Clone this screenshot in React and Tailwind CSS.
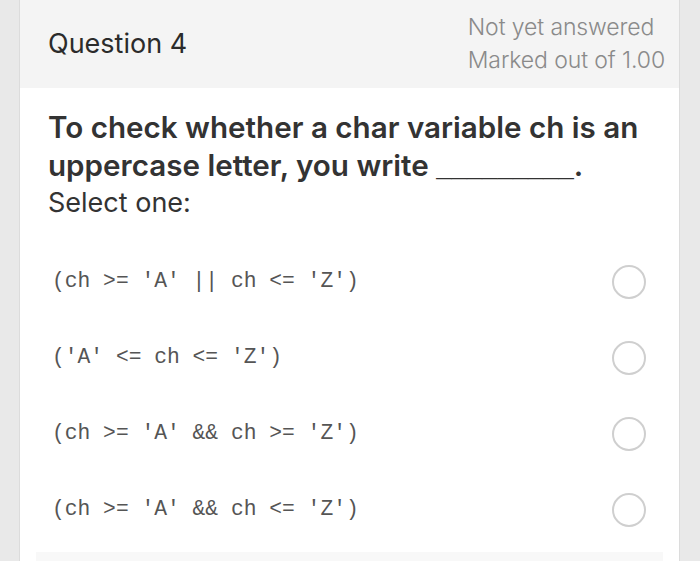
import React from 'react';

const options = [
  "(ch >= 'A' || ch <= 'Z')",
  "('A' <= ch <= 'Z')",
  "(ch >= 'A' && ch >= 'Z')",
  "(ch >= 'A' && ch <= 'Z')",
];

export default function App() {
  return (
    <div className="w-[700px] h-[561px] overflow-hidden bg-[#e9e9e9] flex" style={{ fontFamily: 'Inter, "Liberation Sans", Arial, sans-serif' }}>
      <div className="ml-[19px] w-[661px] h-full bg-white border-l border-r border-[#dcdcdc] flex flex-col">
        <div className="h-[88px] bg-[#f4f4f4] flex items-center justify-between pl-[28px] pr-[14px] shrink-0">
          <h2 className="text-[27px] text-[#2b2b2b] tracking-[0px]">Question 4</h2>
          <div className="text-[23px] leading-[33px] text-[#8a8a8a] tracking-[-0.1px] font-light">
            <p>Not yet answered</p>
            <p>Marked out of 1.00</p>
          </div>
        </div>

        <div className="pl-[28px] pr-[14px] pt-[20px]">
          <p className="text-[29.6px] leading-[38px] font-semibold text-[#333] tracking-[0px]">
            To check whether a char variable ch is an uppercase letter, you write{' '}
            <span className="text-[27.5px] leading-none font-bold" style={{ fontFamily: '"Liberation Sans", Arial, sans-serif' }}>_________</span>.
          </p>
          <p className="text-[27px] leading-[38px] text-[#333] tracking-[0px]">Select one:</p>
        </div>

        <div className="flex flex-col mt-[22px]">
          {options.map((opt) => (
            <div key={opt} className="h-[76px] flex items-center justify-between pl-[32px] pr-[33px]">
              <span className="text-[21.3px] text-[#555] whitespace-pre" style={{ fontFamily: '"Liberation Mono", "Courier New", monospace' }}>
                {opt}
              </span>
              <span className="w-[34px] h-[34px] rounded-full border-2 border-[#cfcfcf] bg-white"></span>
            </div>
          ))}
        </div>

        <div className="mt-auto mx-[16px] h-[9px] bg-[#f8f8f8]"></div>
      </div>
    </div>
  );
}
